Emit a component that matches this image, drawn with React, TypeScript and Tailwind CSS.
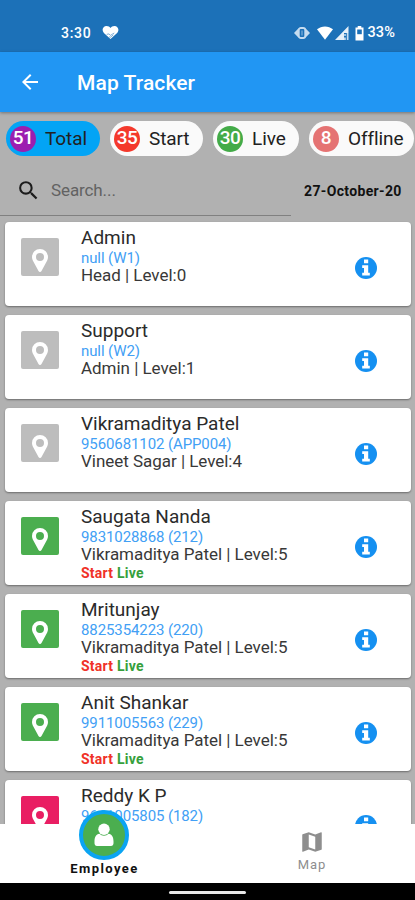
import React, { useState } from 'react';
import { MdArrowBack, MdMap, MdSearch } from 'react-icons/md';

interface Employee {
  name: string;
  contact: string;
  detail: string;
  color: string;
  active?: boolean;
}

const filters = [
  { count: 51, label: 'Total', badge: 'bg-[#9c1fb0]', pill: 'w-[94px] bg-[#03a4f5]' },
  { count: 35, label: 'Start', badge: 'bg-[#f4392c]', pill: 'w-[93px] bg-[#fafafa]' },
  { count: 30, label: 'Live', badge: 'bg-[#43ab48]', pill: 'w-[86px] bg-[#fafafa]' },
  { count: 8, label: 'Offline', badge: 'bg-[#e57373]', pill: 'w-[105px] bg-[#fafafa]' },
];

const employees: Employee[] = [
  { name: 'Admin', contact: 'null (W1)', detail: 'Head | Level:0', color: 'bg-[#bdbdbd]' },
  { name: 'Support', contact: 'null (W2)', detail: 'Admin | Level:1', color: 'bg-[#bdbdbd]' },
  { name: 'Vikramaditya Patel', contact: '9560681102 (APP004)', detail: 'Vineet Sagar | Level:4', color: 'bg-[#bdbdbd]' },
  { name: 'Saugata Nanda', contact: '9831028868 (212)', detail: 'Vikramaditya Patel | Level:5', color: 'bg-[#4bae4f]', active: true },
  { name: 'Mritunjay', contact: '8825354223 (220)', detail: 'Vikramaditya Patel | Level:5', color: 'bg-[#4bae4f]', active: true },
  { name: 'Anit Shankar', contact: '9911005563 (229)', detail: 'Vikramaditya Patel | Level:5', color: 'bg-[#4bae4f]', active: true },
  { name: 'Reddy K P', contact: '9611005805 (182)', detail: 'Vikramaditya Patel | Level:5', color: 'bg-[#e91e63]' },
];

const StatusBar = () => (
  <div className="flex h-[52px] shrink-0 items-end bg-[#1c71b8] pb-[11px] pl-[61px] pr-[20px] text-white">
    <span className="text-[14px] font-medium leading-4 tracking-[0.7px]">3:30</span>
    <svg className="ml-[11px] mb-[1px]" width="17" height="15" viewBox="0 0 18 15">
      <path d="M9 14.500 2 8C-.8 5 1 .5 4.800 .5 6.800 .5 8.200 1.500 9 2.700 9.800 1.500 11.200 .5 13.200 .5 17 .5 18.800 5 16 8Z" fill="#fff" />
      <path d="m5 9.500 2.300-.5 1.700 1.500 4-2.500M7.500 12l1.500.5 3-2.500" fill="none" stroke="#1c71b8" strokeWidth="0.600" />
    </svg>
    <div className="ml-auto flex items-center">
      <svg width="16" height="12" viewBox="0 0 16 12">
        <path d="M4.800 1v10L0 6ZM11.200 1v10L16 6Z" fill="#c5dcf0" />
        <rect x="4.800" y="1" width="6.400" height="10" rx="2" fill="#1c71b8" stroke="#c5dcf0" strokeWidth="1.800" />
        <path d="M8 3.500v5" stroke="#c5dcf0" strokeWidth="0.700" />
      </svg>
      <svg className="ml-[7px]" width="16" height="14" viewBox="0 0 16 14">
        <path d="M0 3.300C4.500-.6 11.500-.6 16 3.300L8 13.800Z" fill="#fff" />
      </svg>
      <svg className="ml-[2px]" width="14" height="14" viewBox="0 0 14 14">
        <path d="M13.500 0v7H9v7H0Z" fill="#e6f0f9" />
        <path d="M9 8.200h2v1.600H9ZM11.800 7h1.700v7h-1.700ZM9 11.500h1.800V14H9Z" fill="#c5dcf0" />
      </svg>
      <svg className="ml-[6px]" width="9" height="15" viewBox="0 0 9 15">
        <path d="M2.700 0h3.600v1.500H8.500v13H.5v-13H2.700Z" fill="#fff" />
        <path d="M2.200 3.500h4.600v4.700H2.200Z" fill="#1c71b8" />
      </svg>
      <span className="ml-[4px] text-[14.500px] font-medium leading-4 tracking-[0.1px]">33%</span>
    </div>
  </div>
);

const PinIcon = () => (
  <svg className="mt-[6px]" width="16" height="23" viewBox="0 0 16 23">
    <path
      d="M8 0a8 8 0 0 0-8 8c0 1.300.3 2.400.8 3.500L6.500 22c.6 1.200 2.400 1.200 3 0l5.700-10.500c.5-1.100.8-2.200.8-3.500a8 8 0 0 0-8-8Zm0 4a4 4 0 1 1 0 8 4 4 0 0 1 0-8Z"
      fill="#fff"
      fillRule="evenodd"
    />
  </svg>
);

const InfoIcon = () => (
  <svg className="mr-[34px] mt-[35px]" width="22" height="22" viewBox="0 0 22 22">
    <circle cx="11" cy="11" r="11" fill="#1590f1" />
    <path d="M9 2.500h4.200v3.700H9ZM7.200 8.200h6v7.500h1.600v2.800H7.200v-2.800H9v-4.600H7.200Z" fill="#fff" />
  </svg>
);

const EmployeeCard = ({ employee }: { employee: Employee }) => (
  <div className="flex h-[84px] shrink-0 rounded-[4px] bg-white pl-4 shadow-[0_1px_2px_rgba(0,0,0,0.4)]">
    <div className={`mt-4 flex h-[38px] w-[38px] items-center justify-center rounded-[2px] ${employee.color}`}>
      <PinIcon />
    </div>
    <div className="ml-[22px] flex-1 whitespace-nowrap pt-[5px] text-[#2b2b2b]">
      <p className="text-[19px] leading-[22px]">{employee.name}</p>
      <p className="text-[15px] leading-[18px] tracking-[-0.1px] text-[#42a0f5]">{employee.contact}</p>
      <p className="text-[17px] leading-[17px] tracking-[-0.03px] text-[#383838]">{employee.detail}</p>
      {employee.active && (
        <p className="pt-px text-[14px] font-bold leading-[18px] tracking-[0.25px]">
          <span className="text-[#f03127]">Start</span> <span className="text-[#36a03c]">Live</span>
        </p>
      )}
    </div>
    <InfoIcon />
  </div>
);

const App: React.FC = () => {
  const [query, setQuery] = useState('');

  return (
    <div className="flex h-[900px] w-[415px] flex-col overflow-hidden bg-[#b1b1b1] font-[Roboto,sans-serif]">
      <StatusBar />

      {/* App bar */}
      <div className="z-10 flex h-[60px] shrink-0 items-center bg-[#2196f3] pl-[18px] text-white shadow-[0_1px_3px_rgba(0,0,0,0.35)]">
        <MdArrowBack className="h-6 w-6" />
        <h1 className="ml-[35px] pt-[3px] text-[21px] font-medium tracking-[0.1px]">Map Tracker</h1>
      </div>

      {/* Filters */}
      <div className="flex shrink-0 gap-[10px] pl-[6px] pt-[9px]">
        {filters.map((f) => (
          <button key={f.label} className={`flex h-[35px] shrink-0 items-center rounded-full pl-[4px] text-[#212121] ${f.pill}`}>
            <span className={`flex h-[26px] w-[26px] items-center justify-center rounded-full text-[19px] font-medium tracking-[-0.5px] text-white ${f.badge}`}>
              {f.count}
            </span>
            <span className="ml-[9px] pt-[2px] text-[19px] tracking-[-0.1px]">{f.label}</span>
          </button>
        ))}
      </div>

      {/* Search */}
      <div className="flex h-[60px] shrink-0">
        <div className="flex w-[291px] items-center border-b border-[#808080] pl-[16px] pt-[10px]">
          <MdSearch className="h-[25px] w-[25px] text-[#1c1c1c]" />
          <input
            value={query}
            onChange={(e) => setQuery(e.target.value)}
            placeholder="Search..."
            className="ml-[10px] w-[220px] bg-transparent pt-px text-[17px] tracking-[-0.1px] outline-none placeholder:text-[#626262]"
          />
        </div>
        <span className="ml-[13px] mt-[25px] whitespace-nowrap text-[14px] font-bold leading-5 tracking-[0.35px] text-[#111]">27-October-20</span>
      </div>

      {/* Employee list */}
      <div className="flex min-h-0 flex-1 flex-col gap-[9px] overflow-hidden pl-[5px] pr-1 pt-[6px]">
        {employees.map((e) => (
          <EmployeeCard key={e.name} employee={e} />
        ))}
      </div>

      {/* Bottom navigation */}
      <div className="relative z-10 flex h-[59px] shrink-0 bg-white">
        <div className="flex w-[208px] flex-col items-center">
          <div className="-mt-[14px] flex h-[50px] w-[50px] shrink-0 items-center justify-center rounded-full border-[4px] border-[#0ba4f2] bg-[#4bae4f]">
            <svg width="20" height="24" viewBox="0 0 20 24" fill="#fff">
              <circle cx="10" cy="6.300" r="5.700" />
              <path d="M5.500 10.800C2 11 .5 14.500 .5 18.500v1.700c0 1.600 1 2.800 2.500 2.800h14c1.500 0 2.500-1.200 2.500-2.800v-1.700c0-4-1.500-7.500-5-7.700-1.200 1.200-2.700 1.900-4.500 1.900s-3.300-.7-4.500-1.900Z" />
            </svg>
          </div>
          <span className="pl-px text-[13px] font-bold leading-[17px] tracking-[1.4px] text-[#111]">Employee</span>
        </div>
        <div className="flex flex-1 flex-col items-center pt-[5px] text-[#8e8e8e]">
          <MdMap className="h-[26px] w-[26px]" />
          <span className="pl-px pt-px text-[13px] leading-[18px] tracking-[0.9px]">Map</span>
        </div>
      </div>

      {/* Home indicator */}
      <div className="flex h-[17px] shrink-0 justify-center bg-black pt-2">
        <div className="h-[3px] w-[77px] rounded-full bg-[#e8e8e8]" />
      </div>
    </div>
  );
};

export default App;
